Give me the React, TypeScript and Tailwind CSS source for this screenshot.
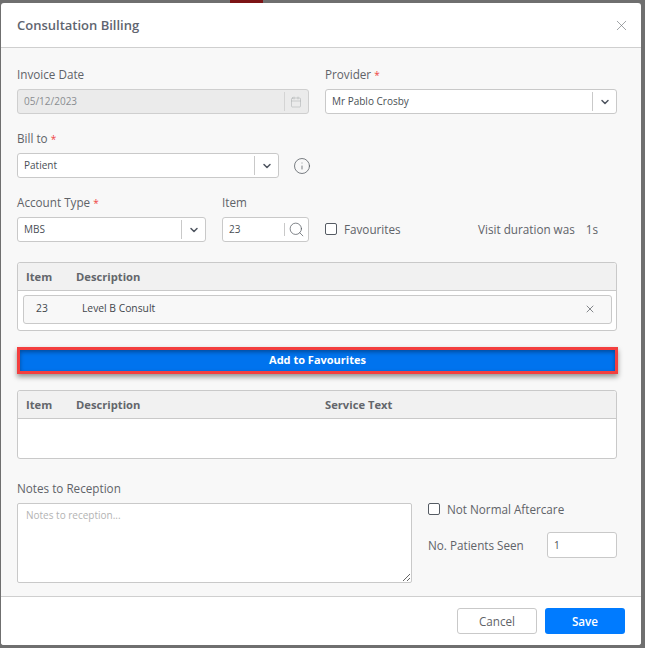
import { Calendar, ChevronDown, Info, Search, X } from 'lucide-react';

const font = { label: 'text-[11.7px] leading-[16px] text-[#5f6368]' };

function Req() {
  return <span className="text-[#ef4444] text-[10px] leading-none ml-[3px]">*</span>;
}

function SelectBox({ value, className }: { value: string; className: string }) {
  return (
    <div className={`h-[25px] flex items-center bg-white border border-[#c9c9c9] rounded-[3px] ${className}`}>
      <span className="flex-1 pl-[6px] text-[10px] text-[#4a4f55]">{value}</span>
      <div className="w-[24px] h-[19px] flex items-center justify-center border-l border-[#c9c9c9]">
        <ChevronDown size={12} strokeWidth={3} className="text-[#4f5560]" />
      </div>
    </div>
  );
}

function CheckBox({ label }: { label: string }) {
  return (
    <div className="flex items-center">
      <div className="w-[12px] h-[12px] bg-white border border-[#555b63] rounded-[2px]" />
      <span className={`${font.label} ml-[7px] font-medium`}>{label}</span>
    </div>
  );
}

function TableHead({ third }: { third?: boolean }) {
  return (
    <div className="h-[28px] pt-[1px] flex items-center bg-[#f1f1f1] border-b border-[#c9c9c9] rounded-t-[3px] text-[11.2px] font-bold text-[#63666b]">
      <span className="w-[58px] pl-[8px]">Item</span>
      <span className="w-[249px]">Description</span>
      {third && <span>Service Text</span>}
    </div>
  );
}

export default function App() {
  return (
    <div className="w-[645px] h-[648px] bg-[#6f6f6f] pt-[3px] pr-[4px] pb-[3px] pl-[1px] font-['Open_Sans',sans-serif] overflow-hidden relative">
      <div className="absolute left-[230px] top-0 w-[33px] h-[3px] bg-[#7c1416]" />
      <div className="w-[640px] h-[642px] flex flex-col rounded-[3px] bg-white overflow-hidden">
        <div className="h-[45px] shrink-0 flex items-center justify-between pl-[16px] pr-[11px] border-b border-[#cfcfcf]">
          <span className="text-[13px] font-semibold text-[#5f6570] pt-[1px]">Consultation Billing</span>
          <X size={17} strokeWidth={0.9} className="text-[#6b6f75]" />
        </div>

        <div className="flex-1 bg-[#f8f8f8] pl-[16px] pr-[24px] pt-[18px]">
          <div className="flex gap-[16px]">
            <div className="w-[292px]">
              <div className={`${font.label} font-medium`}>Invoice Date</div>
              <div className="mt-[7px] h-[25px] flex items-center bg-[#ebebeb] border border-[#cfcfcf] rounded-[3px]">
                <span className="flex-1 pl-[6px] text-[10px] text-[#8a8d91]">05/12/2023</span>
                <div className="w-[24px] h-[19px] flex items-center justify-center border-l border-[#d4d4d4] pr-[2px]">
                  <Calendar size={12} strokeWidth={1} className="text-[#a5a8ab]" />
                </div>
              </div>
            </div>
            <div className="w-[292px]">
              <div className={`${font.label} font-medium`}>Provider<Req /></div>
              <SelectBox value="Mr Pablo Crosby" className="mt-[7px] w-[292px]" />
            </div>
          </div>

          <div className={`${font.label} font-medium mt-[16px]`}>Bill to<Req /></div>
          <div className="mt-[7px] flex items-center">
            <SelectBox value="Patient" className="w-[262px]" />
            <Info size={18} strokeWidth={1} className="ml-[14px] text-[#50555c]" />
          </div>

          <div className="flex mt-[16px]">
            <div className="w-[189px]">
              <div className={`${font.label} font-medium`}>Account Type<Req /></div>
              <SelectBox value="MBS" className="mt-[7px]" />
            </div>
            <div className="w-[87px] ml-[16px]">
              <div className={`${font.label} font-medium`}>Item</div>
              <div className="mt-[7px] h-[25px] flex items-center bg-white border border-[#c9c9c9] rounded-[3px]">
                <span className="flex-1 pl-[6px] text-[10px] text-[#4a4f55]">23</span>
                <div className="w-[24px] h-[13px] flex items-center justify-center border-l border-[#c9c9c9]">
                  <Search size={17} strokeWidth={1} className="text-[#50555c]" />
                </div>
              </div>
            </div>
            <div className="w-[292px] ml-[16px] pt-[22px] h-[48px] flex items-center justify-between pr-[19px]">
              <CheckBox label="Favourites" />
              <div className={`${font.label} font-medium flex`}>
                <span>Visit duration was</span>
                <span className="ml-[11px]">1s</span>
              </div>
            </div>
          </div>

          <div className="mt-[20px] w-[600px] h-[69px] bg-white border border-[#c9c9c9] rounded-[3px]">
            <TableHead />
            <div className="ml-[5px] mr-[4px] mt-[4px] h-[29px] pb-[2px] flex items-center bg-[#f8f8f8] border border-[#c9c9c9] rounded-[3px] text-[10.3px] text-[#43474c]">
              <span className="w-[58px] pl-[12px]">23</span>
              <span className="flex-1">Level B Consult</span>
              <X size={12} strokeWidth={1.5} className="mr-[15px] text-[#5d6167]" />
            </div>
          </div>

          <button className="mt-[16px] w-[601px] h-[27px] block bg-[#0073ee] border-[3px] border-[#f33f3f] shadow-[0_3px_5px_rgba(0,0,0,0.4),inset_0_2px_4px_rgba(0,0,0,0.35)] text-[11px] font-bold text-white">
            Add to Favourites
          </button>

          <div className="mt-[16px] w-[600px] h-[69px] bg-white border border-[#c9c9c9] rounded-[3px]">
            <TableHead third />
          </div>

          <div className={`${font.label} font-medium mt-[21px]`}>Notes to Reception</div>
          <div className="flex mt-[7px]">
            <textarea
              placeholder="Notes to reception..."
              className="w-[395px] h-[80px] block bg-white border border-[#c9c9c9] rounded-[2px] px-[8px] py-[4px] text-[10px] outline-none placeholder:text-[#b3b3b3]"
            />
            <div className="ml-[16px] w-[189px]">
              <div className="h-[12px] flex items-center"><CheckBox label="Not Normal Aftercare" /></div>
              <div className="mt-[17px] flex items-center justify-between">
                <span className={`${font.label} font-medium`}>No. Patients Seen</span>
                <div className="w-[70px] h-[26px] flex items-center pl-[6px] bg-white border border-[#c9c9c9] rounded-[3px] text-[10px] text-[#4a4f55]">1</div>
              </div>
            </div>
          </div>
        </div>

        <div className="h-[49px] shrink-0 flex items-center justify-end gap-[8px] pr-[16px] border-t border-[#cfcfcf] bg-white">
          <button className="w-[80px] h-[26px] bg-white border border-[#c9c9c9] rounded-[3px] text-[11.7px] text-[#5f6368] pt-[1px]">Cancel</button>
          <button className="w-[80px] h-[26px] bg-[#007bff] rounded-[3px] text-[11.7px] font-semibold text-white pt-[1px]">Save</button>
        </div>
      </div>
    </div>
  );
}
